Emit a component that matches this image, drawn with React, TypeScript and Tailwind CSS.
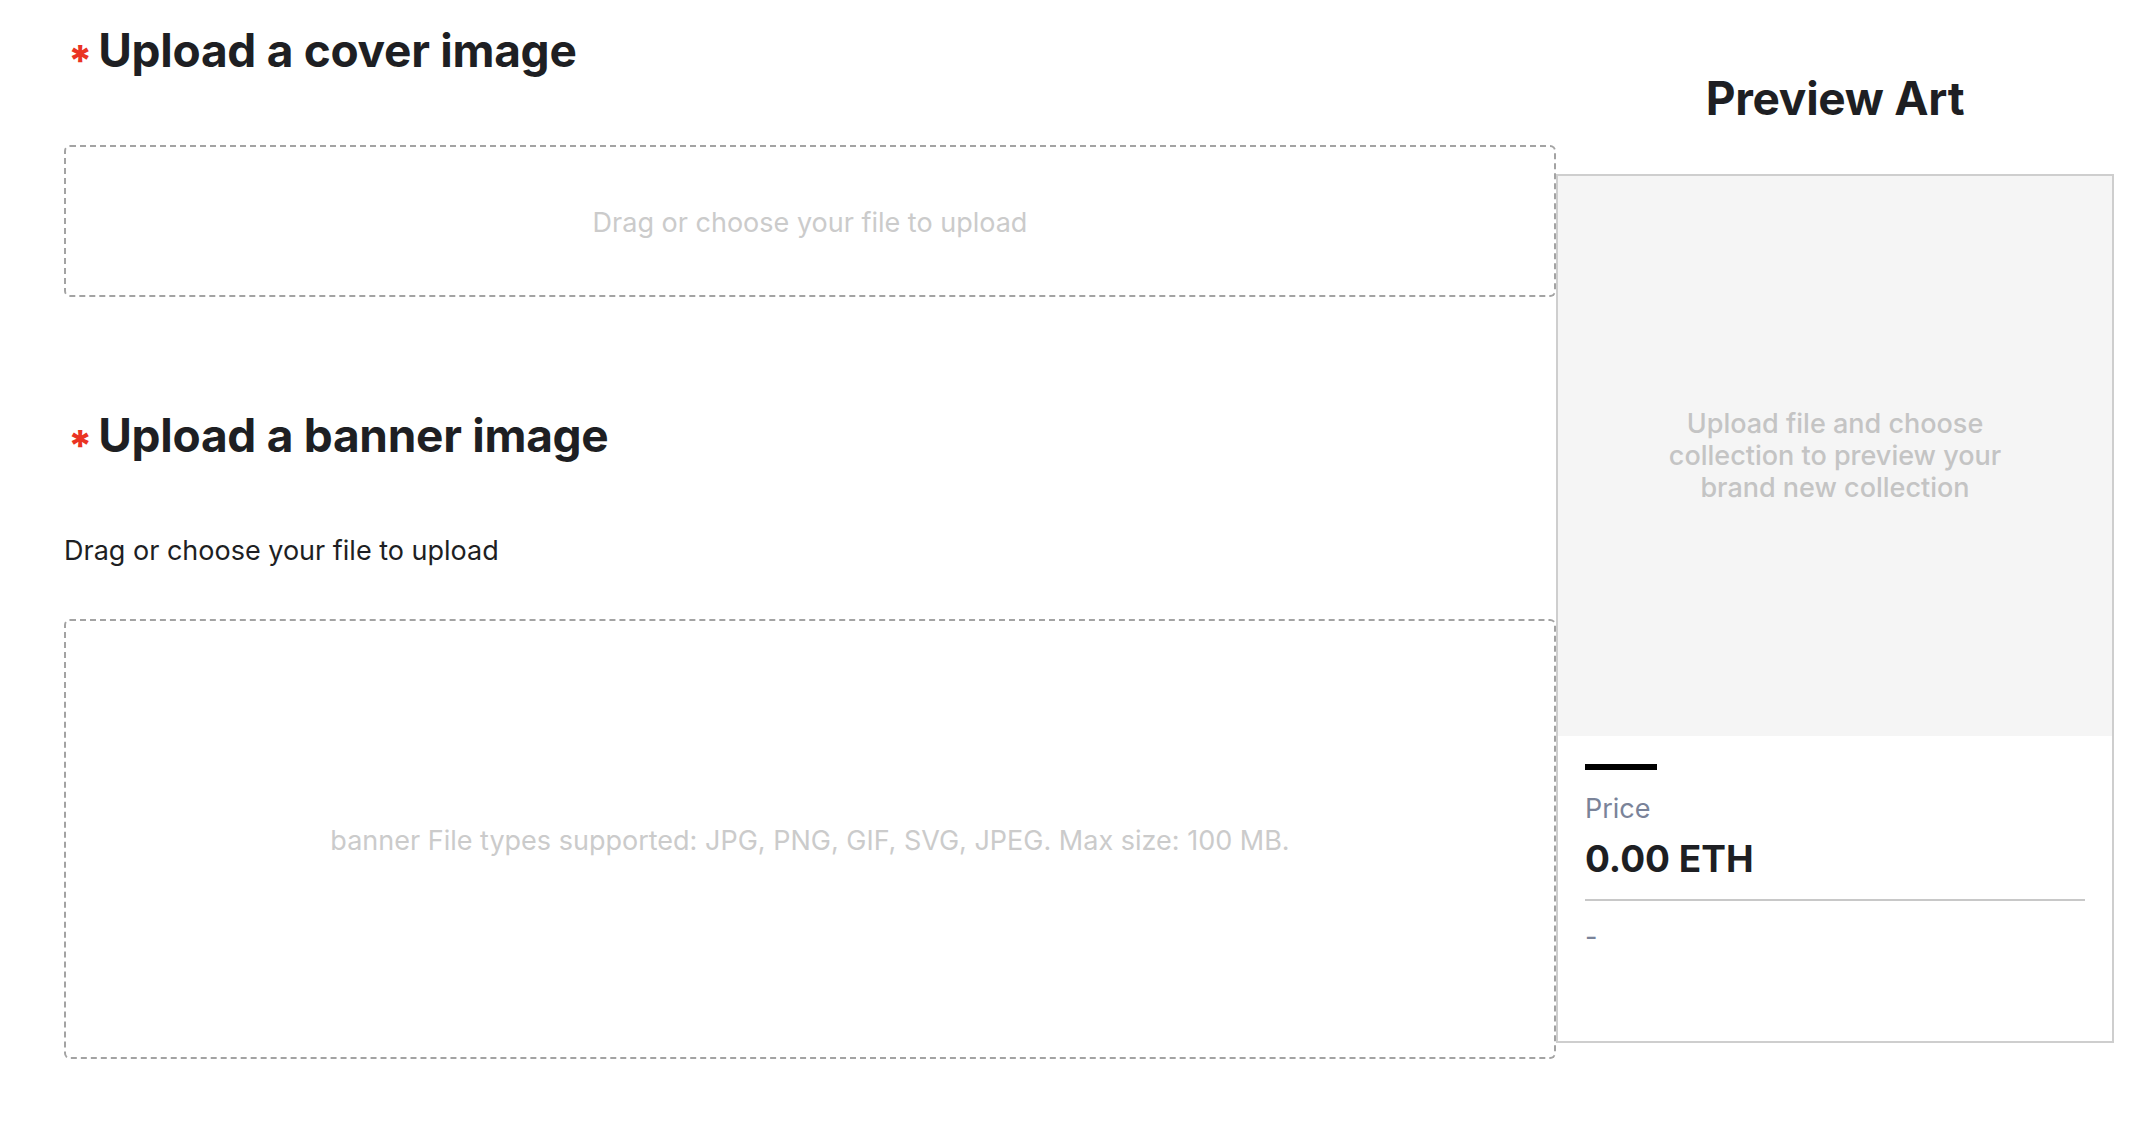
const font = { fontFamily: 'Inter, "Noto Sans", sans-serif' };

function Required() {
  return (
    <span className="mr-[6px] ml-[4px] translate-y-[11px] text-[42px] font-extrabold leading-none text-[#ea3323]">
      *
    </span>
  );
}

function UploadBox({ text, className }: { text: string; className: string }) {
  return (
    <div
      className={`flex items-center justify-center rounded-[6px] border-2 border-dashed border-[#a3a3a3] ${className}`}
    >
      <p className="mt-[3px] text-[27px] leading-[36px] text-[#cbcbcb]">{text}</p>
    </div>
  );
}

export default function App() {
  return (
    <div className="flex min-h-screen bg-white text-[#1e1f23]" style={font}>
      <div className="ml-[64px] w-[1492px] pt-[22px]">
        <h2 className="flex h-[56px] items-center text-[46px] font-bold leading-[56px] tracking-[-0.006em]">
          <Required />
          Upload a cover image
        </h2>
        <UploadBox className="mt-[67px] h-[152px]" text="Drag or choose your file to upload" />

        <h2 className="mt-[110px] flex h-[56px] items-center text-[46px] font-bold leading-[56px] tracking-[-0.006em]">
          <Required />
          Upload a banner image
        </h2>
        <p className="mt-[70px] text-[27px] leading-[36px]">Drag or choose your file to upload</p>
        <UploadBox
          className="mt-[50px] h-[440px]"
          text="banner File types supported: JPG, PNG, GIF, SVG, JPEG. Max size: 100 MB."
        />
      </div>

      <div className="w-[558px] pt-[70px]">
        <h2 className="text-center text-[46px] font-bold leading-[56px] tracking-[-0.006em]">Preview Art</h2>
        <div className="mt-[48px] flex h-[869px] flex-col border-2 border-[#cecece]">
          <div className="flex h-[560px] items-center justify-center bg-[#f5f5f5]">
            <p className="w-[390px] text-center text-[27px] font-medium leading-[32px] text-[#c4c4c4]">
              Upload file and choose collection to preview your brand new collection
            </p>
          </div>
          <div className="px-[27px] pt-[28px]">
            <div className="h-[6px] w-[72px] bg-black" />
            <p className="mt-[21px] text-[27px] leading-[36px] text-[#7a8399]">Price</p>
            <p className="mt-[10px] text-[37px] font-bold leading-[44px]">0.00 ETH</p>
            <div className="mt-[18px] h-[2px] bg-[#c8c8c8]" />
            <p className="mt-[18px] text-[27px] leading-[36px] text-[#7a8399]">-</p>
          </div>
        </div>
      </div>
    </div>
  );
}
